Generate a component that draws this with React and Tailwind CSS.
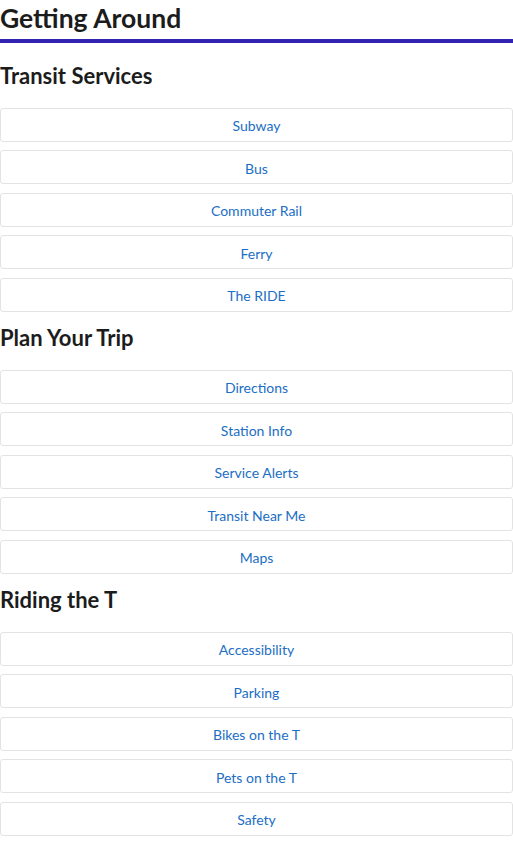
import React from "react";

const sections = [
  {
    title: "Transit Services",
    links: ["Subway", "Bus", "Commuter Rail", "Ferry", "The RIDE"],
  },
  {
    title: "Plan Your Trip",
    links: ["Directions", "Station Info", "Service Alerts", "Transit Near Me", "Maps"],
  },
  {
    title: "Riding the T",
    links: ["Accessibility", "Parking", "Bikes on the T", "Pets on the T", "Safety"],
  },
];

const App = () => {
  return (
    <div className="min-h-screen bg-white font-['Lato',sans-serif] text-[#1c1c1c]">
      <h1 className="pt-[3px] pb-[4px] text-[26.5px] leading-[1.2] font-bold border-b-4 border-[#3224b0]">
        Getting Around
      </h1>
      <div className="flex flex-col gap-[11.5px] pt-[18.6px]">
        {sections.map((section) => (
          <div key={section.title} className="flex flex-col">
            <h2 className="pt-[2px] text-[22px] leading-[1.2] font-bold mb-[18px]">
              {section.title}
            </h2>
            <div className="flex flex-col gap-[8.5px]">
              {section.links.map((link) => (
                <a
                  key={link}
                  href="#"
                  className="flex items-center justify-center h-[34px] pt-[2px] border border-[#e3e3e3] rounded-[3px] text-[14px] text-[#1b6ec4]"
                >
                  {link}
                </a>
              ))}
            </div>
          </div>
        ))}
      </div>
    </div>
  );
};

export default App;
